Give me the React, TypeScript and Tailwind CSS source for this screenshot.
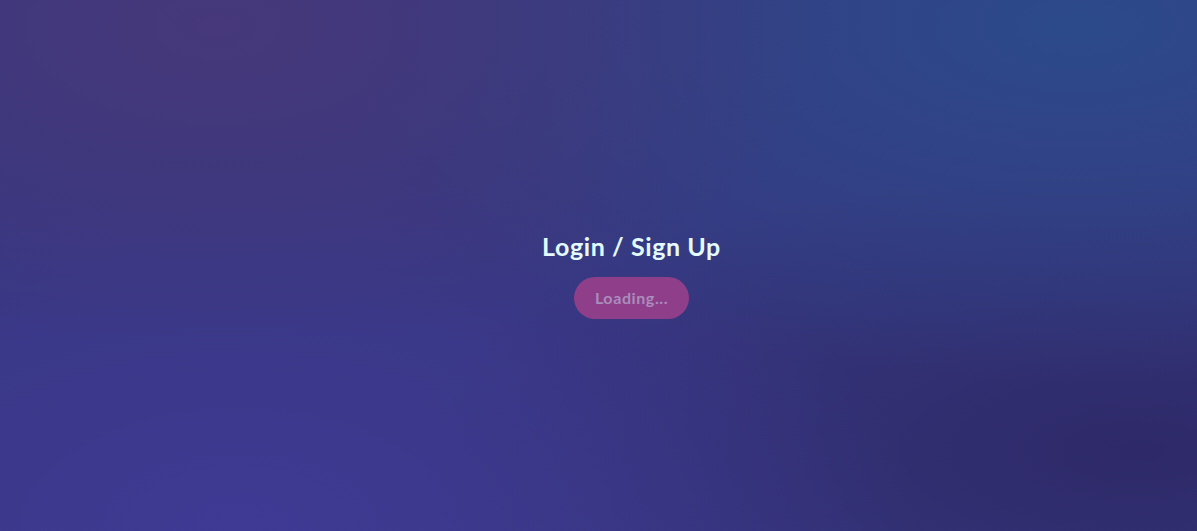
export default function App() {
  return (
    <div className="min-h-screen w-full flex flex-col items-center justify-center pt-[19px] pl-[66px] bg-[radial-gradient(ellipse_at_18%_5%,#46387a_0%,transparent_45%),radial-gradient(ellipse_at_90%_5%,#2c4a8a_0%,transparent_50%),radial-gradient(ellipse_at_20%_100%,#3f3a94_0%,transparent_50%),radial-gradient(ellipse_at_95%_85%,#2e2a69_0%,transparent_45%),linear-gradient(#373780,#373780)]" style={{ fontFamily: "Lato, 'Noto Sans', sans-serif" }}>
      <h1 className="text-[25px] font-bold text-[#e3fbff] leading-[32px] tracking-[0.6px] -mt-[1px]">Login / Sign Up</h1>
      <button className="mt-[15px] h-[42px] w-[115px] rounded-full bg-[#8f3f89] text-[16px] font-bold text-[#aa8cbd] tracking-[0.6px]">Loading...</button>
    </div>
  );
}
